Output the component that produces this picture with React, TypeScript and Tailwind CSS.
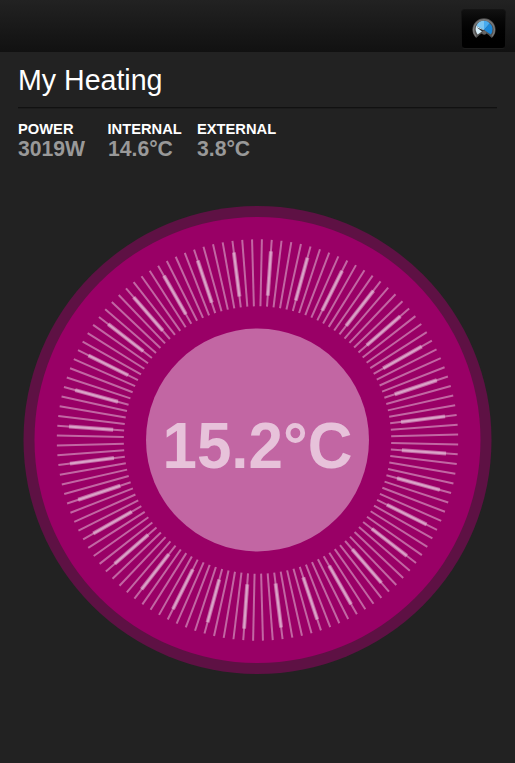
const CENTER = 234;
const STEP = 360 / 128;
const OFFSET = 4.07;

const ticks = Array.from({ length: 128 }, (_, i) => ({
  angle: OFFSET + i * STEP,
  major: i % 4 === 0,
}));

const stats = [
  { label: "POWER", value: "3019W" },
  { label: "INTERNAL", value: "14.6°C" },
  { label: "EXTERNAL", value: "3.8°C" },
];

function GaugeIcon() {
  return (
    <svg width="24" height="22" viewBox="0 0 24 22" className="-mt-[3px]">
      <path d="M4.2 21A11.6 11.4 0 1 1 19.8 21L16 17.4Q12 15 8 17.4Z" fill="#515151" />
      <path d="M4 19.4A10.4 10.2 0 1 1 20 19.4" fill="none" stroke="#7b7b7b" strokeWidth="1.4" />
      <path d="M12 13L5.6 17.4A8.4 8.4 0 0 1 4.4 8.8Z" fill="#d9f0fa" />
      <path d="M12 13L4.4 8.8A8.4 8.4 0 0 1 12 3.8Z" fill="#7cc6f2" />
      <path d="M12 13V3.8A8.4 8.4 0 0 1 17.8 6.2Z" fill="#48acf0" />
      <path d="M12 13L17.8 6.2A8.4 8.4 0 0 1 18.8 17.4Z" fill="#1a87d8" />
      <path d="M4.6 10.2L13 13.8L11.6 15.8Z" fill="#303030" />
      <circle cx="12.2" cy="15.6" r="2.2" fill="#666" />
    </svg>
  );
}

function Dial() {
  return (
    <div className="relative mt-[45px] ml-[5px] h-[468px] w-[469px]">
      <svg className="block" width="469" height="468" viewBox="-0.5 0 469 468">
        <circle cx={CENTER} cy={CENTER} r="234" fill="#990066" fillOpacity="0.5" />
        <circle cx={CENTER} cy={CENTER} r="223" fill="#990066" />
        {ticks.map((t, i) => (
          <g key={i} transform={`rotate(${t.angle} ${CENTER} ${CENTER})`} stroke="#fff">
            <line x1={CENTER} x2={CENTER} y1="33.3" y2="100.3" strokeWidth="2" strokeOpacity="0.4" />
            {t.major && <line x1={CENTER} x2={CENTER} y1="45" y2="89.3" strokeWidth="4" strokeOpacity="0.4" />}
          </g>
        ))}
        <circle cx={CENTER} cy={CENTER} r="111.5" fill="#fff" fillOpacity="0.4" />
      </svg>
      <div className="absolute inset-0 flex scale-x-[0.96] items-center justify-center pt-[12px] text-[64.5px] leading-none font-bold text-white/60">
        15.2°C
      </div>
    </div>
  );
}

export default function App() {
  return (
    <div className="h-[763px] w-[515px] overflow-hidden bg-[#222222] font-['Liberation_Sans',Arial,sans-serif]">
      <header className="flex h-[53px] justify-end border-b border-[#222] bg-linear-to-b from-[#222222] to-[#111111] pt-[9px] pr-[9px]">
        <button className="flex h-[40px] w-[45px] items-center justify-center rounded-[4px] border border-[#141414] border-b-[#1c1c1c] bg-linear-to-b from-[#111] to-black">
          <GaugeIcon />
        </button>
      </header>
      <main className="px-[18px]">
        <h1 className="h-[54px] w-[160px] origin-left scale-x-[0.94] pt-[10px] text-[30.4px] leading-[33px] whitespace-nowrap text-white">
          My Heating
        </h1>
        <hr className="h-[2px] border-0 border-b border-[#1c1c1c] bg-[#111]" />
        <div className="mt-[12px] flex">
          {stats.map((s) => (
            <div key={s.label} className="w-[89.5px] font-bold whitespace-nowrap">
              <div className="text-[14.7px] leading-[16px] text-white">{s.label}</div>
              <div className="origin-left scale-x-[0.94] text-[22.5px] leading-[24px] text-[#999]">{s.value}</div>
            </div>
          ))}
        </div>
        <Dial />
      </main>
    </div>
  );
}
